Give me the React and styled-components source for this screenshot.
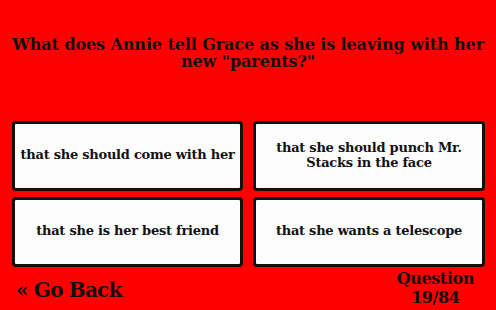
import React from 'react';
import styled, { createGlobalStyle } from 'styled-components';

const GlobalStyle = createGlobalStyle`
  html, body {
    margin: 0;
    padding: 0;
    background: #ff0000;
  }
  body {
    font-family: "DejaVu Serif", "Liberation Serif", serif;
  }
`;

const Page = styled.div`
  width: 496px;
  height: 310px;
  background: #ff0000;
  display: flex;
  flex-direction: column;
  overflow: hidden;
`;

const Header = styled.div`
  height: 121px;
  display: flex;
  align-items: center;
  justify-content: center;
  padding: 0 6px 16px;
  box-sizing: border-box;
`;

const Prompt = styled.h1`
  margin: 0;
  font-size: 16px;
  line-height: 17px;
  font-weight: bold;
  text-align: center;
  color: #111;
  letter-spacing: -0.1px;
`;

const Answers = styled.div`
  display: grid;
  grid-template-columns: 231px 232px;
  grid-auto-rows: 70px;
  column-gap: 10px;
  row-gap: 6px;
  padding: 0 11px 0 12px;
`;

const Answer = styled.button`
  box-sizing: border-box;
  background: #fdfdfd;
  border: 3px solid #111;
  border-radius: 4px;
  padding: 0 1px 3px;
  font-family: inherit;
  font-weight: bold;
  font-size: 13px;
  line-height: 15px;
  color: #111;
  text-align: center;
  letter-spacing: -0.25px;
  display: flex;
  align-items: center;
  justify-content: center;
`;

const Footer = styled.div`
  flex: 1;
  display: flex;
  justify-content: space-between;
  align-items: flex-start;
  padding: 2px 22px 0 16px;
`;

const BackLink = styled.a`
  font-size: 20px;
  font-weight: bold;
  color: #111;
  margin-top: 9px;
  letter-spacing: -0.8px;
  cursor: pointer;
`;

const Counter = styled.div`
  font-size: 16px;
  line-height: 19px;
  font-weight: bold;
  color: #111;
  text-align: center;
  letter-spacing: -0.4px;
`;

const answers = [
  'that she should come with her',
  'that she should punch Mr. Stacks in the face',
  'that she is her best friend',
  'that she wants a telescope',
];

export default function App() {
  return (
    <Page>
      <GlobalStyle />
      <Header>
        <Prompt>What does Annie tell Grace as she is leaving with her new "parents?"</Prompt>
      </Header>
      <Answers>
        {answers.map((a) => (
          <Answer key={a}>{a}</Answer>
        ))}
      </Answers>
      <Footer>
        <BackLink>« Go Back</BackLink>
        <Counter>
          Question
          <br />
          19/84
        </Counter>
      </Footer>
    </Page>
  );
}
